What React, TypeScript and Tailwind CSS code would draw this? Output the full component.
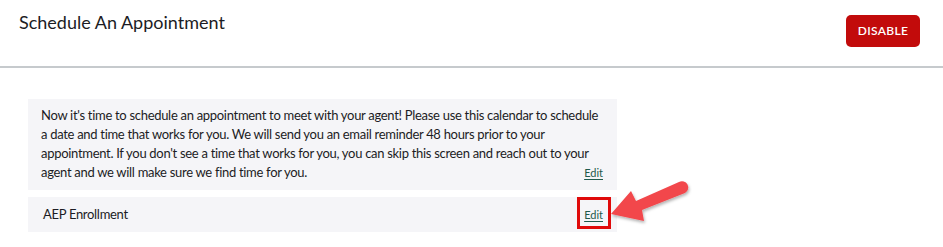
import React from "react";

const font = { fontFamily: 'Lato, "Liberation Sans", sans-serif' };

function EditLink({ className = "" }: { className?: string }) {
  return (
    <a
      href="#"
      className={`text-[11px] leading-[19px] tracking-normal text-[#1f5a4c] underline underline-offset-2 ${className}`}
    >
      Edit
    </a>
  );
}

function Arrow() {
  return (
    <svg
      className="absolute left-[600px] top-[170px]"
      width="100"
      height="60"
      viewBox="0 0 100 60"
    >
      <defs>
        <filter id="sh" x="-20%" y="-20%" width="140%" height="140%">
          <feDropShadow dx="1" dy="2" stdDeviation="1.5" floodColor="#000" floodOpacity="0.3" />
        </filter>
      </defs>
      <path
        d="M11 44 L31 21 L36 31 L79 12 A6 6 0 0 1 85 23 L42 40 L44 51 Z"
        fill="#f2464b"
        filter="url(#sh)"
      />
    </svg>
  );
}

export default function App() {
  return (
    <div className="relative h-[247px] w-[943px] bg-white text-[#1c1c24]" style={font}>
      <header className="flex h-[68px] items-start justify-between border-b-2 border-[#c6cacd] pl-[19px] pr-[23px]">
        <h1 className="pt-[10px] text-[18px] leading-[24px]">Schedule An Appointment</h1>
        <button className="mt-[15px] h-[32px] w-[74px] rounded-[5px] bg-[#c20b0b] text-[12px] font-semibold tracking-[0.3px] text-white">
          DISABLE
        </button>
      </header>

      <div className="flex w-[617px] flex-col gap-[7px] pl-[28px] pt-[31px]">
        <div className="bg-[#f5f5f8] pb-[8px] pl-[13px] pr-[14px] pt-[7px]">
          <p className="text-[13px] leading-[19px] tracking-[-0.3px]">
            Now it's time to schedule an appointment to meet with your agent! Please use this calendar to schedule a
            date and time that works for you. We will send you an email reminder 48 hours prior to your appointment.
            If you don't see a time that works for you, you can skip this screen and reach out to your agent and we
            will make sure we find time for you.
            <EditLink className="float-right" />
          </p>
        </div>
        <div className="flex items-center justify-between bg-[#f5f5f8] py-[8px] pl-[15px] pr-[14px] text-[13px] leading-[19px] tracking-[-0.3px]">
          <span>AEP Enrollment</span>
          <span className="relative">
            <EditLink />
            <span className="absolute -left-[7px] -right-[8px] -top-[8px] -bottom-[5px] border-[3px] border-[#e00a0a]" />
          </span>
        </div>
      </div>

      <Arrow />
    </div>
  );
}
